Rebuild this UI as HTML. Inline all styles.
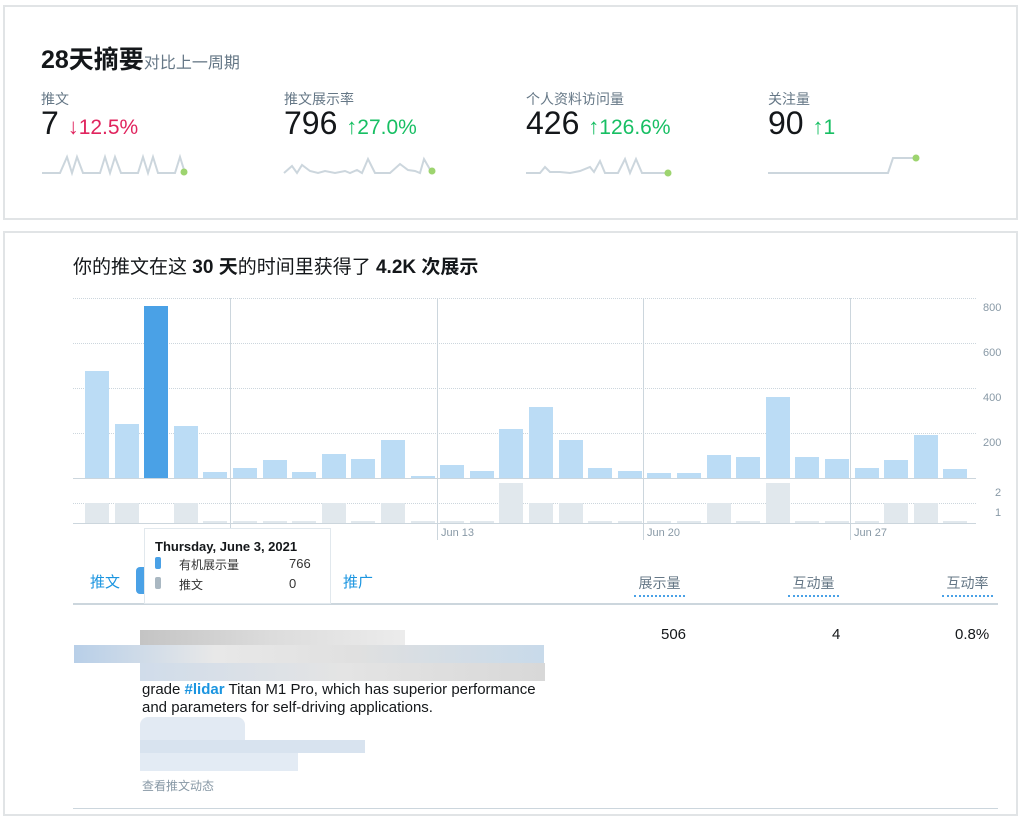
<!DOCTYPE html>
<html><head><meta charset="utf-8"><style>
*{margin:0;padding:0;box-sizing:border-box}
body{width:1024px;height:818px;background:#fff;font-family:"Liberation Sans","Noto Sans CJK SC",sans-serif;position:relative;overflow:hidden;color:#222}
.a{position:absolute;white-space:nowrap}
.card{position:absolute;border:2px solid #e1e4e6;background:#fff}
.lbl{font-size:14px;color:#657786}
.big{font-size:32px;color:#14171a;line-height:1}
.red{color:#e0245e;font-size:21px}
.grn{color:#17bf63;font-size:21px}
.ar{font-weight:bold;font-size:22px}
.b{position:absolute;width:24px;background:#bbdcf5}
.g{position:absolute;width:24px;background:#e1e8ed}
.hl{position:absolute;left:73px;width:903px;border-top:1px dotted #ccd6dd}
.vl{position:absolute;width:1px;background:#ccd6dd}
.ax{position:absolute;font-size:11px;color:#8899a6}
.th{position:absolute;font-size:14px;color:#657786;border-bottom:2px dotted #4aa1e6;padding-bottom:2px}
</style></head><body>
<div class="card" style="left:3px;top:5px;width:1015px;height:215px"></div>
<div class="a" style="left:41px;top:40px;font-size:25px;font-weight:bold;color:#14171a">28天摘要<span style="font-size:16px;font-weight:normal;color:#657786">对比上一周期</span></div>

<div class="a lbl" style="left:41px;top:89px">推文</div>
<div class="a big" style="left:41px;top:107px">7 <span class="red"><span class="ar">↓</span>12.5%</span></div>
<div class="a lbl" style="left:284px;top:89px">推文展示率</div>
<div class="a big" style="left:284px;top:107px">796 <span class="grn"><span class="ar">↑</span>27.0%</span></div>
<div class="a lbl" style="left:526px;top:89px">个人资料访问量</div>
<div class="a big" style="left:526px;top:107px">426 <span class="grn"><span class="ar">↑</span>126.6%</span></div>
<div class="a lbl" style="left:768px;top:89px">关注量</div>
<div class="a big" style="left:768px;top:107px">90 <span class="grn"><span class="ar">↑</span>1</span></div>

<svg class="a" style="left:0;top:0" width="1024" height="200">
<g fill="none" stroke="#ccd6dd" stroke-width="2">
<polyline points="42,173 60,173 67,157 72,173 77,157 83,173 100,173 105,157 110,173 115,157 121,173 138,173 143,157 148,173 153,157 158,173 175,173 180,157 185,173"/>
<polyline points="284,173 292,166 297,173 302,165 310,171 318,173 325,171 335,173 345,171 350,173 357,170 362,173 368,159 375,173 390,173 400,164 408,170 415,171 420,173 424,159 432,173"/>
<polyline points="526,173 540,173 545,167 550,172 560,172 570,173 580,171 590,167 594,172 600,161 605,173 618,173 625,159 630,173 636,159 642,173 668,173"/>
<polyline points="768,173 888,173 893,158 916,158"/>
</g>
<circle cx="184" cy="172" r="3.5" fill="#9dd46f"/><circle cx="432" cy="171" r="3.5" fill="#9dd46f"/><circle cx="668" cy="173" r="3.5" fill="#9dd46f"/><circle cx="916" cy="158" r="3.5" fill="#9dd46f"/>
</svg>

<div class="card" style="left:3px;top:231px;width:1015px;height:585px"></div>
<div class="a" style="left:73px;top:252px;font-size:19px;color:#14171a">你的推文在这 <b>30 天</b>的时间里获得了 <b>4.2K 次展示</b></div>

<div class="hl" style="top:298px"></div><div class="hl" style="top:343px"></div><div class="hl" style="top:388px"></div><div class="hl" style="top:433px"></div>
<div class="hl" style="top:478px;border-top:1px solid #ccd6dd"></div>
<div class="hl" style="top:503px"></div>
<div class="hl" style="top:523px;border-top:1px solid #ccd6dd"></div>
<div class="vl" style="left:230px;top:298px;height:242px"></div>
<div class="vl" style="left:437px;top:298px;height:242px"></div>
<div class="vl" style="left:643px;top:298px;height:242px"></div>
<div class="vl" style="left:850px;top:298px;height:242px"></div>
<div class="ax" style="left:983px;top:302px">800</div><div class="ax" style="left:983px;top:347px">600</div><div class="ax" style="left:983px;top:392px">400</div><div class="ax" style="left:983px;top:437px">200</div>
<div class="ax" style="left:995px;top:487px">2</div><div class="ax" style="left:995px;top:507px">1</div>
<div class="ax" style="left:441px;top:527px">Jun 13</div><div class="ax" style="left:647px;top:527px">Jun 20</div><div class="ax" style="left:854px;top:527px">Jun 27</div>

<div class="b" style="left:85px;top:371px;height:107px"></div>
<div class="b" style="left:115px;top:424px;height:54px"></div>
<div class="b" style="left:144px;top:306px;height:172px;background:#4aa1e6"></div>
<div class="b" style="left:174px;top:426px;height:52px"></div>
<div class="b" style="left:203px;top:472px;height:6px"></div>
<div class="b" style="left:233px;top:468px;height:10px"></div>
<div class="b" style="left:263px;top:460px;height:18px"></div>
<div class="b" style="left:292px;top:472px;height:6px"></div>
<div class="b" style="left:322px;top:454px;height:24px"></div>
<div class="b" style="left:351px;top:459px;height:19px"></div>
<div class="b" style="left:381px;top:440px;height:38px"></div>
<div class="b" style="left:411px;top:476px;height:2px"></div>
<div class="b" style="left:440px;top:465px;height:13px"></div>
<div class="b" style="left:470px;top:471px;height:7px"></div>
<div class="b" style="left:499px;top:429px;height:49px"></div>
<div class="b" style="left:529px;top:407px;height:71px"></div>
<div class="b" style="left:559px;top:440px;height:38px"></div>
<div class="b" style="left:588px;top:468px;height:10px"></div>
<div class="b" style="left:618px;top:471px;height:7px"></div>
<div class="b" style="left:647px;top:473px;height:5px"></div>
<div class="b" style="left:677px;top:473px;height:5px"></div>
<div class="b" style="left:707px;top:455px;height:23px"></div>
<div class="b" style="left:736px;top:457px;height:21px"></div>
<div class="b" style="left:766px;top:397px;height:81px"></div>
<div class="b" style="left:795px;top:457px;height:21px"></div>
<div class="b" style="left:825px;top:459px;height:19px"></div>
<div class="b" style="left:855px;top:468px;height:10px"></div>
<div class="b" style="left:884px;top:460px;height:18px"></div>
<div class="b" style="left:914px;top:435px;height:43px"></div>
<div class="b" style="left:943px;top:469px;height:9px"></div>

<div class="g" style="left:85px;top:503px;height:20px"></div>
<div class="g" style="left:115px;top:503px;height:20px"></div>
<div class="g" style="left:174px;top:503px;height:20px"></div>
<div class="g" style="left:322px;top:503px;height:20px"></div>
<div class="g" style="left:381px;top:503px;height:20px"></div>
<div class="g" style="left:499px;top:483px;height:40px"></div>
<div class="g" style="left:529px;top:503px;height:20px"></div>
<div class="g" style="left:559px;top:503px;height:20px"></div>
<div class="g" style="left:707px;top:503px;height:20px"></div>
<div class="g" style="left:766px;top:483px;height:40px"></div>
<div class="g" style="left:884px;top:503px;height:20px"></div>
<div class="g" style="left:914px;top:503px;height:20px"></div>
<div class="g" style="left:203px;top:521px;height:2px"></div><div class="g" style="left:233px;top:521px;height:2px"></div><div class="g" style="left:263px;top:521px;height:2px"></div><div class="g" style="left:292px;top:521px;height:2px"></div><div class="g" style="left:351px;top:521px;height:2px"></div><div class="g" style="left:411px;top:521px;height:2px"></div><div class="g" style="left:440px;top:521px;height:2px"></div><div class="g" style="left:470px;top:521px;height:2px"></div><div class="g" style="left:588px;top:521px;height:2px"></div><div class="g" style="left:618px;top:521px;height:2px"></div><div class="g" style="left:647px;top:521px;height:2px"></div><div class="g" style="left:677px;top:521px;height:2px"></div><div class="g" style="left:736px;top:521px;height:2px"></div><div class="g" style="left:795px;top:521px;height:2px"></div><div class="g" style="left:825px;top:521px;height:2px"></div><div class="g" style="left:855px;top:521px;height:2px"></div><div class="g" style="left:943px;top:521px;height:2px"></div>

<div class="a" style="left:90px;top:571px;font-size:15px;color:#1b95e0">推文</div>
<div class="a" style="left:136px;top:567px;width:12px;height:27px;background:#4aa1e6;border-radius:4px"></div>
<div class="a" style="left:343px;top:571px;font-size:15px;color:#1b95e0">推广</div>
<div class="a" style="left:73px;top:603px;width:925px;height:2px;background:#ccd6dd"></div>
<div class="th" style="left:634px;top:573px;width:51px;text-align:center">展示量</div>
<div class="th" style="left:788px;top:573px;width:51px;text-align:center">互动量</div>
<div class="th" style="left:942px;top:573px;width:51px;text-align:center">互动率</div>

<div class="a" style="left:144px;top:528px;width:187px;height:76px;background:#fff;border:1px solid #e1e8ed"></div>
<div class="a" style="left:155px;top:539px;font-size:13px;font-weight:bold;color:#14171a">Thursday, June 3, 2021</div>
<div class="a" style="left:155px;top:557px;width:6px;height:12px;background:#4aa1e6;border-radius:2px"></div>
<div class="a" style="left:179px;top:556px;font-size:12px;color:#333">有机展示量</div>
<div class="a" style="left:289px;top:556px;font-size:13px;color:#333">766</div>
<div class="a" style="left:155px;top:577px;width:6px;height:12px;background:#aab8c2;border-radius:2px"></div>
<div class="a" style="left:179px;top:576px;font-size:12px;color:#333">推文</div>
<div class="a" style="left:289px;top:576px;font-size:13px;color:#333">0</div>

<div class="a" style="left:140px;top:630px;width:265px;height:24px;background:linear-gradient(90deg,#c4c4c4,#dcdcdc,#ececec)"></div>
<div class="a" style="left:74px;top:645px;width:470px;height:18px;background:linear-gradient(90deg,#b8cfe8,#e8e8e8 30%,#e0e0e0 60%,#c8daea)"></div>
<div class="a" style="left:140px;top:663px;width:405px;height:18px;background:linear-gradient(90deg,#d0dcea,#e4e4e4,#d8d8d8)"></div>
<div class="a" style="left:142px;top:681px;font-size:15px;color:#14171a;line-height:18px">grade <b style="color:#1b95e0">#lidar</b> Titan M1 Pro, which has superior performance<br>and parameters for self-driving applications.</div>
<div class="a" style="left:140px;top:717px;width:105px;height:30px;background:#e2eaf3;border-radius:8px"></div>
<div class="a" style="left:140px;top:740px;width:225px;height:13px;background:#d8e3ef"></div>
<div class="a" style="left:140px;top:753px;width:158px;height:18px;background:#e3ebf4"></div>
<div class="a" style="left:142px;top:777px;font-size:12px;color:#8899a6">查看推文动态</div>
<div class="a" style="left:661px;top:626px;font-size:15px;color:#14171a">506</div>
<div class="a" style="left:832px;top:626px;font-size:15px;color:#14171a">4</div>
<div class="a" style="left:955px;top:626px;font-size:15px;color:#14171a">0.8%</div>
<div class="a" style="left:73px;top:808px;width:925px;height:1px;background:#ccd6dd"></div>
</body></html>
